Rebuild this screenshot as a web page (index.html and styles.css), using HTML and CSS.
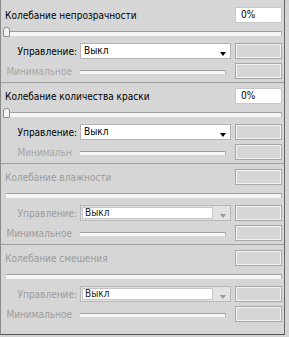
FILE: index.html
```html
<!DOCTYPE html>
<html lang="ru">
<head>
    <meta charset="UTF-8" />
    <title>Динамика цвета</title>
    <link rel="stylesheet" href="styles.css">
</head>
<body>
    <div class="panel">
        <section class="group">
            <div class="head">
                <span class="title">Колебание непрозрачности</span>
                <span class="field">0%</span>
            </div>
            <div class="slider"><span class="thumb"></span></div>
            <div class="row">
                <span class="label">Управление:</span>
                <div class="select"><span class="val">Выкл</span><span class="arrow"></span></div>
                <span class="box"></span>
            </div>
            <div class="row min">
                <span class="label">Минимальное</span>
                <div class="track"></div>
                <span class="box"></span>
            </div>
        </section>

        <section class="group">
            <div class="head">
                <span class="title">Колебание количества краски</span>
                <span class="field">0%</span>
            </div>
            <div class="slider"><span class="thumb"></span></div>
            <div class="row">
                <span class="label">Управление:</span>
                <div class="select"><span class="val">Выкл</span><span class="arrow"></span></div>
                <span class="box"></span>
            </div>
            <div class="row min">
                <span class="label">Минимальн</span>
                <div class="track"></div>
                <span class="box"></span>
            </div>
        </section>

        <section class="group off">
            <div class="head">
                <span class="title">Колебание влажности</span>
                <span class="box"></span>
            </div>
            <div class="slider"></div>
            <div class="row">
                <span class="label">Управление:</span>
                <div class="select"><span class="val">Выкл</span><span class="arrow"></span></div>
                <span class="box"></span>
            </div>
            <div class="row min">
                <span class="label">Минимальное</span>
                <div class="track"></div>
                <span class="box"></span>
            </div>
        </section>

        <section class="group off last">
            <div class="head">
                <span class="title">Колебание смешения</span>
                <span class="box"></span>
            </div>
            <div class="slider"></div>
            <div class="row">
                <span class="label">Управление:</span>
                <div class="select"><span class="val">Выкл</span><span class="arrow"></span></div>
                <span class="box"></span>
            </div>
            <div class="row min">
                <span class="label">Минимальное</span>
                <div class="track"></div>
                <span class="box"></span>
            </div>
        </section>
    </div>
</body>
</html>
```

FILE: styles.css
```css
* { box-sizing: border-box; }
body {
    margin: 0;
    background: #d4d4d4;
    font-family: "DejaVu Sans Condensed", "DejaVu Sans", sans-serif;
    font-size: 10px;
    color: #000;
}
.panel {
    width: 285px;
    height: 335px;
    background: #d6d6d6;
    border-left: 1px solid #8a8a8a;
    border-right: 1px solid #666;
    border-bottom: 1px solid #555;
    padding-top: 2px;
}
.group {
    height: 81px;
    padding: 5px 2px 0 4px;
    border-bottom: 1px solid #9e9e9e;
}
.group.last {
    border-bottom: none;
}
.head {
    display: flex;
    align-items: center;
    justify-content: space-between;
    height: 16px;
}
.title {
    white-space: nowrap;
}
.field, .box {
    width: 47px;
    height: 16px;
    flex: none;
}
.field {
    background: #fff;
    border: 1px solid #c8c8c8;
    padding-left: 5px;
    line-height: 14px;
}
.box {
    border: 1px solid #a8a8a8;
    box-shadow: inset 0 0 0 1px #f2f2f2;
    background: #d6d6d6;
}

/* Schieberegler */
.slider {
    position: relative;
    height: 11px;
    margin-top: 4px;
}
.slider::before {
    content: "";
    position: absolute;
    left: 0;
    right: 0;
    top: 4px;
    height: 4px;
    border-top: 1px solid #a0a0a0;
    border-right: 1px solid #b4b4b4;
    background: #f6f6f6;
}
.off .slider::before {
    left: 1px;
}
.thumb {
    position: absolute;
    left: -2px;
    top: 0;
    width: 7px;
    height: 10px;
    background: #f4f4f4;
    border: 1px solid #8c8c8c;
    border-radius: 3px 3px 1px 1px;
}
.track {
    width: 146px;
    height: 4px;
    margin: 1px 9px 0 0;
    border-top: 1px solid #a0a0a0;
    border-right: 1px solid #b4b4b4;
    background: #f6f6f6;
    flex: none;
}

/* Zeilen */
.row {
    display: flex;
    align-items: center;
    height: 16px;
    margin-top: 5px;
}
.row.min {
    margin-top: 4px;
}
.label {
    width: 72px;
    margin-right: 3px;
    text-align: right;
    white-space: nowrap;
    flex: none;
}
.min .label {
    width: 67px;
    margin-right: 8px;
    color: #a6a6a6;
}
.select {
    position: relative;
    width: 151px;
    height: 16px;
    margin-right: 4px;
    background: #fff;
    border: 1px solid #b4b4b4;
    padding-left: 3px;
    line-height: 14px;
    flex: none;
}
.arrow {
    position: absolute;
    right: 4px;
    top: 8px;
    width: 1px;
    height: 0;
    border-left: 3px solid transparent;
    border-right: 3px solid transparent;
    border-top: 4px solid #000;
}

/* deaktivierte Gruppen */
.off .title,
.off .label {
    color: #9c9c9c;
}
.off .select {
    background: #e2e2e2;
    border-color: #b8b8b8;
    padding: 1px;
}
.off .val {
    display: block;
    width: 131px;
    height: 12px;
    background: #fff;
    border: 1px solid #c6c6c6;
    padding-left: 2px;
    line-height: 10px;
    color: #222;
}
.off .arrow {
    border-top-color: #9a9a9a;
}
```
